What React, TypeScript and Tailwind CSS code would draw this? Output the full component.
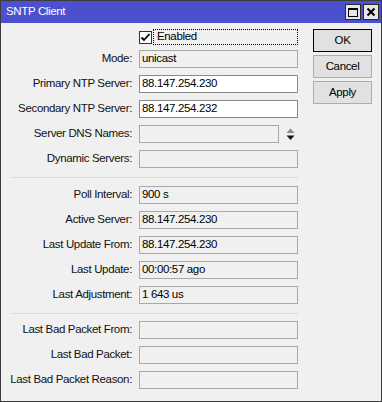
import React from "react";

const font = { fontFamily: '"Liberation Sans", Arial, sans-serif' };

function Field({ value, editable, w }: { value?: string; editable?: boolean; w?: string }) {
  return (
    <div
      className={`h-[18px] ${w ?? "w-[159px]"} border flex items-center pl-[2px] text-[11.5px] tracking-[-0.35px] leading-none text-black whitespace-nowrap ${
        editable ? "bg-white border-[#8a8a8a]" : "bg-[#f0f0f0] border-[#a8a8a8]"
      }`}
    >
      {value}
    </div>
  );
}

function Row({ label, children }: { label: string; children: React.ReactNode }) {
  return (
    <div className="flex items-center h-[18px]">
      <div className="w-[131px] text-right text-[11.5px] tracking-[-0.35px] leading-none text-[#111] whitespace-nowrap">{label}</div>
      <div className="ml-[7px] flex items-center">{children}</div>
    </div>
  );
}

export default function App() {
  return (
    <div style={font} className="w-[382px] h-[402px] flex flex-col bg-[#f0f0f0] border border-[#3c3c3c] overflow-hidden">
      <div className="h-[22px] bg-[#4b50cf] flex items-center justify-between pl-[5px] pr-[2px] shrink-0">
        <span className="text-white text-[11.5px] tracking-[-0.35px]">SNTP Client</span>
        <div className="flex gap-[2px]">
          <div className="w-[16px] h-[16px] bg-[#e6e6e6] border border-[#2a2a2a] flex items-center justify-center">
            <div className="w-[10px] h-[9px] border border-black border-t-2" />
          </div>
          <div className="w-[16px] h-[16px] bg-[#e6e6e6] border border-[#2a2a2a] flex items-center justify-center">
            <svg width="10" height="10" viewBox="0 0 10 10">
              <path d="M1.5 1.5 L8.5 8.5 M8.5 1.5 L1.5 8.5" stroke="black" strokeWidth="2" />
            </svg>
          </div>
        </div>
      </div>
      <div className="flex flex-1">
        <div className="w-[310px] pl-0 pt-[6px]">
          <div className="flex items-center h-[16px] ml-[138px]">
            <div className="w-[13px] h-[13px] bg-white border border-[#333] flex items-center justify-center">
              <svg width="11" height="11" viewBox="0 0 11 11">
                <path d="M1.5 5.5 L4 8 L9.5 2" stroke="black" strokeWidth="1.8" fill="none" />
              </svg>
            </div>
            <div className="ml-[1px] w-[145px] h-[16px] border border-dotted border-black flex items-center pl-[3px] text-[11.5px] tracking-[-0.35px] leading-none">
              Enabled
            </div>
          </div>
          <div className="flex flex-col gap-[7px] mt-[5px]">
            <Row label="Mode:"><Field value="unicast" /></Row>
            <Row label="Primary NTP Server:"><Field value="88.147.254.230" editable /></Row>
            <Row label="Secondary NTP Server:"><Field value="88.147.254.232" editable /></Row>
            <Row label="Server DNS Names:">
              <Field w="w-[140px]" />
              <svg className="ml-[7px]" width="9" height="13" viewBox="0 0 9 13">
                <path d="M4.5 0.5 L8.5 5 L0.5 5 Z" fill="#8a8a8a" />
                <path d="M0.5 7.5 L8.5 7.5 L4.5 12 Z" fill="#111" />
              </svg>
            </Row>
            <Row label="Dynamic Servers:"><Field /></Row>
          </div>
          <div className="ml-[10px] w-[287px] h-px bg-[#d9d9d9] mt-[9px] mb-[8px]" />
          <div className="flex flex-col gap-[7px]">
            <Row label="Poll Interval:"><Field value="900 s" /></Row>
            <Row label="Active Server:"><Field value="88.147.254.230" /></Row>
            <Row label="Last Update From:"><Field value="88.147.254.230" /></Row>
            <Row label="Last Update:"><Field value="00:00:57 ago" /></Row>
            <Row label="Last Adjustment:"><Field value="1 643 us" /></Row>
          </div>
          <div className="ml-[10px] w-[287px] h-px bg-[#d9d9d9] mt-[9px] mb-[7px]" />
          <div className="flex flex-col gap-[7px]">
            <Row label="Last Bad Packet From:"><Field /></Row>
            <Row label="Last Bad Packet:"><Field /></Row>
            <Row label="Last Bad Packet Reason:"><Field /></Row>
          </div>
        </div>
        <div className="flex flex-col gap-[3px] pt-[6px] ml-[2px]">
          <button className="w-[59px] h-[23px] bg-[#e1e1e1] border border-black text-[11.5px] tracking-[-0.35px]">OK</button>
          <button className="w-[59px] h-[23px] bg-[#e1e1e1] border border-[#adadad] text-[11.5px] tracking-[-0.35px]">Cancel</button>
          <button className="w-[59px] h-[23px] bg-[#e1e1e1] border border-[#adadad] text-[11.5px] tracking-[-0.35px]">Apply</button>
        </div>
      </div>
    </div>
  );
}
